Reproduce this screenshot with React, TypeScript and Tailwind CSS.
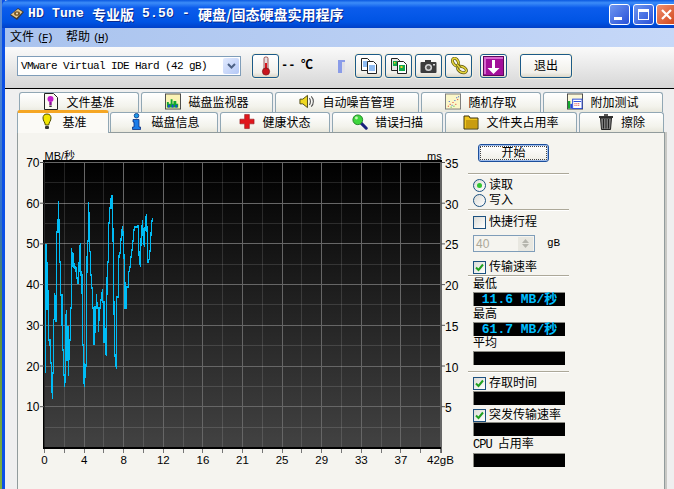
import type { ReactNode } from "react";

const MONO = "font-['Liberation_Mono','Noto_Sans_CJK_SC',monospace]";

const trace = [
  [45.5, 373], [45.5, 245], [46.5, 245], [47, 310], [47.3, 262], [48, 294], [48.5, 340], [50, 340], [50.5, 363], [51.5, 363], [51.7, 387], [52.5, 399], [52.7, 373], [53.5, 373], [53.7, 320], [54.5, 318], [54.6, 293], [55.5, 300], [56, 322], [56.7, 292], [56.8, 232], [58, 232], [58.3, 201], [59, 222], [59.4, 262], [60.5, 262], [60.6, 295], [62, 295], [62.1, 325], [62.7, 325], [62.9, 350], [63.3, 350], [63.4, 375], [64.6, 375], [64.8, 387], [65.3, 367], [65.4, 330], [66.3, 310], [66.4, 360], [67, 360], [67.1, 327], [68.3, 327], [68.4, 376], [69, 358], [69.1, 340], [70.3, 340], [70.4, 308], [71.7, 308], [71.8, 248], [72.4, 267], [73, 253], [73.2, 268], [74.7, 263], [75, 268], [76, 268], [76.3, 278], [77.3, 278], [77.5, 283], [78.7, 283], [79.3, 253], [80.3, 243], [81, 275], [82, 275], [82.2, 310], [82.7, 345], [83.3, 345], [83.4, 372], [84.3, 387], [84.5, 363], [85, 378], [86.3, 362], [86.4, 317], [87.3, 241], [88.3, 241], [88.4, 202], [89.3, 219], [89.4, 250], [90.3, 252], [90.4, 275], [91.7, 275], [91.8, 288], [92.7, 288], [92.8, 308], [94, 308], [94.1, 345], [95, 332], [95.1, 307], [96.7, 307], [96.8, 294], [97, 308], [98.3, 308], [98.4, 332], [99.3, 313], [100.7, 303], [101.7, 294], [102.7, 289], [102.8, 302], [104, 302], [104.1, 343], [105.3, 328], [105.4, 352], [106.3, 356], [106.5, 330], [107.3, 262], [108.3, 262], [108.4, 223], [109.7, 223], [109.8, 208], [111, 208], [111.1, 198], [112.3, 195], [113, 233], [114, 308], [114.7, 352], [115.7, 363], [116.3, 369], [116.7, 345], [116.8, 297], [118.3, 297], [118.4, 265], [119.3, 253], [120.7, 253], [120.8, 242], [121.7, 231], [122.7, 226], [123.3, 240], [124.3, 263], [125, 285], [125.1, 308], [126.3, 308], [126.4, 287], [128.3, 287], [128.4, 275], [130, 267], [131, 257], [132.3, 248], [133.3, 238], [134.3, 227], [137.3, 227], [138.3, 225], [139, 255], [140.3, 267], [141.3, 232], [142.7, 220], [143.3, 243], [144.3, 245], [145.3, 223], [146.3, 214], [147, 228], [148, 263], [149, 260], [150.3, 248], [151.3, 228], [152.3, 218],
];

function Chart() {
  const hLines = Array.from({ length: 14 }, (_, i) => Math.round(162 + 20.35 * i) + 0.5);
  const vLines = Array.from({ length: 21 }, (_, i) => Math.round(45 + 19.8 * i) - 0.5);
  const left = ["70", "60", "50", "40", "30", "20", "10"];
  const right = ["35", "30", "25", "20", "15", "10", "5"];
  const bottom = ["0", "4", "8", "12", "16", "21", "25", "29", "33", "37", "42gB"];
  return (
    <svg width="450" height="356" viewBox="18 133 450 356" className="shrink-0 block">
      <defs>
        <linearGradient id="plot" x1="0" y1="0" x2="0" y2="1">
          <stop offset="0" stopColor="#000000" />
          <stop offset="1" stopColor="#424242" />
        </linearGradient>
      </defs>
      <rect x="44" y="162" width="397" height="285" fill="url(#plot)" />
      {hLines.map((y, i) => (
        <line key={y} x1="44" x2="441" y1={y} y2={y} stroke={i % 2 === 0 ? "#666666" : "#ffffff"} strokeOpacity={i % 2 === 0 ? 1 : 0.13} />
      ))}
      {vLines.map((x, i) => (
        <line key={x} x1={x} x2={x} y1="162" y2="448" stroke={i % 2 === 0 ? "#666666" : "#ffffff"} strokeOpacity={i % 2 === 0 ? 1 : 0.13} />
      ))}
      <rect x="43" y="160" width="399" height="2" fill="#000" />
      <rect x="43" y="160" width="1.6" height="289" fill="#000" />
      <rect x="43" y="447" width="399" height="2" fill="#000" />
      <line x1="441.5" x2="441.5" y1="162" y2="453" stroke="#666666" />
      <polyline points={trace.map((p) => p.join(",")).join(" ")} fill="none" stroke="#00bcf5" strokeWidth="1.2" shapeRendering="crispEdges" />
      {left.map((t, i) => (
        <g key={t}>
          <text x="39.5" y={167 + 40.7 * i} textAnchor="end" fontSize="12" fill="#000">{t}</text>
          <line x1="40" x2="44" y1={162.5 + 40.7 * i} y2={162.5 + 40.7 * i} stroke="#555" />
        </g>
      ))}
      {right.map((t, i) => (
        <g key={t}>
          <text x="445" y={168 + 40.7 * i} fontSize="12" fill="#000">{t}</text>
          <line x1="441" x2="445" y1={162.5 + 40.7 * i} y2={162.5 + 40.7 * i} stroke="#555" />
        </g>
      ))}
      {vLines.map((x) => (
        <line key={x} x1={x} x2={x} y1="449" y2="453" stroke="#777" />
      ))}
      {bottom.map((t, i) => (
        <text key={t} x={44.5 + 39.6 * i} y="463.5" textAnchor="middle" fontSize="11.5" fill="#000">{t}</text>
      ))}
      <text x="44.5" y="160" fontSize="11" fill="#000">MB/秒</text>
      <text x="427" y="159.5" fontSize="11" fill="#000">ms</text>
    </svg>
  );
}

function HddIcon() {
  return (
    <svg width="16" height="16" viewBox="0 0 16 16">
      <path d="M1 9 9 2l6 4-7 8z" fill="#3a3a3a" />
      <path d="M2 8.5 9 3l4.5 3L7.5 12z" fill="#e9c98a" />
      <ellipse cx="8" cy="7.5" rx="3" ry="2.3" fill="#7a5a2a" />
      <circle cx="8" cy="7.5" r="1" fill="#f6e9c8" />
    </svg>
  );
}

function Thermometer() {
  return (
    <svg width="10" height="20" viewBox="0 0 10 20">
      <rect x="3" y="1" width="4" height="13" rx="1.5" fill="#e8e0e0" stroke="#8a3030" strokeWidth="0.8" />
      <rect x="4" y="7" width="2" height="8" fill="#d8141c" />
      <circle cx="5" cy="15.5" r="3.6" fill="#c8141c" stroke="#7a1014" strokeWidth="0.7" />
    </svg>
  );
}

function DocsIcon({ variant }: { variant: "lines" | "image" }) {
  const back = variant === "lines" ? "#ffffff" : "#e8e8e8";
  return (
    <svg width="18" height="18" viewBox="0 0 18 18">
      <path d="M1.5 1.5h6l2 2v10h-8z" fill={back} stroke="#222" />
      <path d="M7.5 4.5h6l3 3v9h-9z" fill="#fff" stroke="#222" />
      {variant === "lines" ? (
        <>
          <path d="M3 5h4M3 7h4M3 9h4" stroke="#1e78e6" />
          <path d="M9 9h6M9 11h6M9 13h6" stroke="#1e78e6" />
        </>
      ) : (
        <>
          <rect x="3" y="4" width="4" height="5" fill="#11a84a" />
          <rect x="9" y="8" width="6" height="6" fill="#11a84a" />
          <rect x="10.5" y="9" width="2" height="2" fill="#f5d020" />
          <rect x="4" y="5" width="1.5" height="1.5" fill="#f5d020" />
        </>
      )}
    </svg>
  );
}

function CameraIcon() {
  return (
    <svg width="17" height="15" viewBox="0 0 17 15">
      <path d="M5 3V1h6v2h4.5a1 1 0 0 1 1 1v9a1 1 0 0 1-1 1h-14a1 1 0 0 1-1-1V4a1 1 0 0 1 1-1z" fill="#3c3c3c" />
      <circle cx="8.5" cy="8.5" r="3.6" fill="#d4d4d4" />
      <circle cx="8.5" cy="8.5" r="2" fill="#555" />
      <rect x="13" y="5" width="2" height="1.5" fill="#ddd" />
    </svg>
  );
}

function ChainIcon() {
  const rings = [
    { cx: 5.5, cy: 5, rx: 4, ry: 2.6, r: 60 },
    { cx: 12, cy: 12.5, rx: 4.6, ry: 2.8, r: 25 },
  ];
  return (
    <svg width="18" height="18" viewBox="0 0 18 18">
      <g fill="none">
        {rings.map((o) => (
          <ellipse key={o.cx} cx={o.cx} cy={o.cy} rx={o.rx} ry={o.ry} transform={`rotate(${o.r} ${o.cx} ${o.cy})`} stroke="#5c5410" strokeWidth="3" />
        ))}
        {rings.map((o) => (
          <ellipse key={o.cx} cx={o.cx} cy={o.cy} rx={o.rx} ry={o.ry} transform={`rotate(${o.r} ${o.cx} ${o.cy})`} stroke="#e6d63c" strokeWidth="1.600" />
        ))}
        <path d="M7 7.500l3 3.500" stroke="#5c5410" strokeWidth="3" />
        <path d="M7 7.500l3 3.500" stroke="#e6d63c" strokeWidth="1.600" />
      </g>
    </svg>
  );
}

function SaveArrow() {
  return (
    <svg width="21" height="20" viewBox="0 0 21 20">
      <rect x="0.5" y="0.5" width="20" height="19" fill="#a3109a" stroke="#5c0a5a" />
      <path d="M1 1h19v2H3v15H1z" fill="#d868cf" />
      <path d="M9 4h3v8h4.5l-6 6-6-6H9z" fill="#ffffff" />
    </svg>
  );
}

function BulbIcon() {
  return (
    <svg width="16" height="17" viewBox="0 0 16 17">
      <path d="M8 1c3 0 4 2 4 4 0 3-2 4-2.300 7H6.300C6 9 4 8 4 5c0-2 1-4 4-4z" fill="#f2e600" stroke="#4e4a00" />
      <rect x="6" y="13" width="4" height="3" rx="1" fill="#333" />
    </svg>
  );
}

function InfoIcon() {
  return (
    <svg width="16" height="17" viewBox="0 0 16 17">
      <circle cx="8.500" cy="2.700" r="2.300" fill="#1c9ae8" stroke="#0b2f80" strokeWidth="0.8" />
      <path d="M5 6.500h6V14h1.500v2.500h-8V14H6V9H5z" fill="#1c7ce8" stroke="#0b2f80" strokeWidth="0.8" />
    </svg>
  );
}

function CrossIcon() {
  return (
    <svg width="17" height="17" viewBox="0 0 17 17">
      <path d="M6 1h5v5h5v5h-5v5H6v-5H1V6h5z" fill="#e0161c" stroke="#8c1014" strokeWidth="0.6" />
    </svg>
  );
}

function SearchIcon() {
  return (
    <svg width="18" height="18" viewBox="0 0 18 18">
      <path d="M10 10l6 6" stroke="#16207c" strokeWidth="3.400" strokeLinecap="round" />
      <circle cx="6.500" cy="6.500" r="5.500" fill="#3ed63c" stroke="#1c7c24" />
      <circle cx="5" cy="4.500" r="1.600" fill="#c5f5b5" />
    </svg>
  );
}

function FolderIcon() {
  return (
    <svg width="16" height="16" viewBox="0 0 16 16">
      <path d="M1 4V2h5l1 2h8v11H1z" fill="#f0c61c" stroke="#3c3210" />
      <path d="M3 6h11v8H3z" fill="#c89c10" />
    </svg>
  );
}

function TrashIcon() {
  return (
    <svg width="16" height="17" viewBox="0 0 16 17">
      <path d="M1 3h14v2H1z" fill="#333" />
      <path d="M6 1h4v2H6z" fill="#555" />
      <path d="M2.500 5h11l-1 11.500h-9z" fill="#7c7c7c" stroke="#222" />
      <path d="M5.500 6v9.500M8 6v9.500M10.500 6v9.500" stroke="#222" />
    </svg>
  );
}

function FileBulbIcon() {
  return (
    <svg width="16" height="17" viewBox="0 0 16 17">
      <path d="M1.500 0.500h9l4 4v12h-13z" fill="#fbfaf0" stroke="#222" />
      <circle cx="7.500" cy="6" r="3" fill="#c21ccc" />
      <rect x="6.300" y="9" width="2.400" height="3" fill="#8a1090" />
      <rect x="6.300" y="12.500" width="2.400" height="1.500" fill="#333" />
    </svg>
  );
}

function BarsIcon() {
  return (
    <svg width="17" height="17" viewBox="0 0 17 17">
      <rect x="0.500" y="0.500" width="16" height="16" fill="#fbf3b4" stroke="#444" />
      <path d="M2 15V9h2v2h2V6h2v5h1V8h3v3h2v4z" fill="#12a82c" />
      <path d="M3 15v-3h2v3zM7 15v-3h2v3zM11 15v-3h2v3z" fill="#1848d8" />
    </svg>
  );
}

function SpeakerIcon() {
  return (
    <svg width="17" height="17" viewBox="0 0 17 17">
      <path d="M1 6h3l5-4v13l-5-4H1z" fill="#f0d820" stroke="#4a4410" />
      <path d="M11 5c1.500 1.500 1.500 5.500 0 7M13 3c3 3 3 8 0 11" fill="none" stroke="#4a4a4a" strokeWidth="1.100" />
    </svg>
  );
}

function ScatterIcon() {
  const dots = [[3, 13, "#d81c1c"], [5, 11, "#d81c1c"], [4, 8, "#1c48d8"], [7, 12, "#1c48d8"], [8, 9, "#d81c1c"], [10, 7, "#1c48d8"], [11, 11, "#d81c1c"], [12, 4, "#1c48d8"], [13, 6, "#d81c1c"], [6, 14, "#12a82c"], [9, 13, "#12a82c"], [14, 3, "#1c48d8"]] as const;
  return (
    <svg width="17" height="17" viewBox="0 0 17 17">
      <rect x="0.500" y="0.500" width="16" height="16" fill="#fbf7c8" stroke="#777" />
      {dots.map(([x, y, c]) => (
        <rect key={`${x}-${y}`} x={x} y={y} width="1" height="1" fill={c} />
      ))}
    </svg>
  );
}

function ExtraIcon() {
  return (
    <svg width="17" height="17" viewBox="0 0 17 17">
      <rect x="0.500" y="0.500" width="16" height="16" fill="#fbf7d8" stroke="#444" />
      <rect x="1" y="8" width="2.500" height="8" fill="#12a82c" />
      <rect x="3.500" y="11" width="2" height="5" fill="#2848d8" />
      <rect x="6" y="6" width="10" height="10" fill="#fff" stroke="#2848d8" />
      <path d="M7 8h8v1H7z" fill="#2848d8" />
      <path d="M8 10h1v1H8zM10 10h1v1h-1zM12 10h1v1h-1zM8 12h1v1H8zM10 12h1v1h-1zM12 12h1v1h-1z" fill="#d81c1c" />
    </svg>
  );
}

function ToolButton({ children, className = "w-[27px]" }: { children: ReactNode; className?: string }) {
  return (
    <div className={`h-[24px] ${className} flex items-center justify-center rounded-[3px] border border-[#1c5a87] bg-[linear-gradient(180deg,#ffffff,#f1f0ea_80%,#dcd8c8)] shadow-[0_0_0_1px_#f3efdc] text-[12px] text-black`}>
      {children}
    </div>
  );
}

function Tab({ width, icon, label }: { width: string; icon: ReactNode; label: string }) {
  return (
    <div className={`${width} h-[20px] shrink-0 flex items-center justify-center gap-[7px] rounded-t-[3px] border border-b-0 border-[#91a7b4] bg-[linear-gradient(180deg,#ffffff,#f3f3ec_70%,#e8e7dc)] text-[12px] text-black`}>
      <span className="w-[16px] flex justify-center -mt-[2px]">{icon}</span>
      <span className="whitespace-nowrap">{label}</span>
    </div>
  );
}

function Separator({ className }: { className: string }) {
  return <div className={`${className} h-[2px] border-t border-[#aca899] border-b-white border-b`} />;
}

function CheckBox({ label, checked = false, className = "" }: { label: string; checked?: boolean; className?: string }) {
  return (
    <div className={`${className} ml-[5px] h-[14px] flex items-center gap-[3px] whitespace-nowrap text-[12px] leading-[14px]`}>
      <span className="w-[13px] h-[13px] shrink-0 border border-[#1c5180] bg-[linear-gradient(135deg,#dcdcd7,#ffffff)] flex items-center justify-center">
        {checked && (
          <svg width="9" height="9" viewBox="0 0 9 9">
            <path d="M1 4.500 3.500 7 8 1.500" fill="none" stroke="#21a121" strokeWidth="2" />
          </svg>
        )}
      </span>
      {label}
    </div>
  );
}

function RadioRow({ label, checked = false }: { label: string; checked?: boolean }) {
  return (
    <div className="ml-[5px] h-[15px] flex items-center gap-[3px] text-[12px] leading-[15px]">
      <span className="w-[13px] h-[13px] shrink-0 rounded-full border border-[#1c5180] bg-[linear-gradient(135deg,#dcdcd7,#ffffff)] flex items-center justify-center">
        {checked && <span className="w-[5px] h-[5px] rounded-full bg-[#31c531]" />}
      </span>
      {label}
    </div>
  );
}

function Readout({ value, className = "mt-[1px]" }: { value?: string; className?: string }) {
  return (
    <div className={`${className} ml-[5px] w-[92px] h-[14px] bg-black border-t border-l border-[#8c8c84] flex items-center justify-center text-[13px] leading-none font-bold text-[#00bfff] whitespace-pre ${MONO}`}>
      {value}
    </div>
  );
}

function Label({ children }: { children: ReactNode }) {
  return <div className="ml-[5px] h-[14px] text-[12px] leading-[14px] whitespace-nowrap">{children}</div>;
}

function SidePanel() {
  return (
    <div className="w-[101px] shrink-0 flex flex-col text-black">
      <div className="mt-[11px] ml-[10px] w-[71px] h-[18px] rounded-[3px] border border-[#1c4f9c] shadow-[inset_0_0_0_1px_#9ebcec] bg-[linear-gradient(180deg,#ffffff,#efeee6)] flex items-center justify-center text-[12px]">
        <span className="outline-1 outline-dotted outline-[#444] w-[65px] h-[12px] leading-[12px] text-center whitespace-nowrap">开始</span>
      </div>
      <Separator className="mt-[11px]" />
      <div className="mt-[3px]">
        <RadioRow label="读取" checked />
        <RadioRow label="写入" />
      </div>
      <Separator className="mt-[1px]" />
      <CheckBox label="快捷行程" className="mt-[4px]" />
      <div className="mt-[6px] ml-[5px] h-[17px] flex items-center">
        <div className="w-[62px] h-[17px] border border-[#7f9db9] bg-[#f5f4ef] flex items-center justify-between pl-[2px] pr-[1px] text-[12px] text-[#aca899]">
          40
          <span className="w-[15px] h-[14px] bg-[#e8e7e0] flex flex-col items-center justify-center gap-[1px]">
            <svg width="7" height="4" viewBox="0 0 7 4"><path d="M0 4 3.500 0 7 4z" fill="#b5b5ad" /></svg>
            <svg width="7" height="4" viewBox="0 0 7 4"><path d="M0 0h7L3.500 4z" fill="#b5b5ad" /></svg>
          </span>
        </div>
        <span className={`ml-[12px] text-[11px] ${MONO}`}>gB</span>
      </div>
      <CheckBox label="传输速率" checked className="mt-[8px]" />
      <Separator className="mt-[1px]" />
      <Label>最低</Label>
      <Readout value="11.6 MB/秒" />
      <div className="mt-[1px]"><Label>最高</Label></div>
      <Readout value="61.7 MB/秒" />
      <Label>平均</Label>
      <Readout />
      <Separator className="mt-[6px]" />
      <CheckBox label="存取时间" checked className="mt-[3px]" />
      <Readout />
      <CheckBox label="突发传输速率" checked className="mt-[3px]" />
      <Readout className="mt-0" />
      <div className="mt-[1px]"><Label><span className={`text-[12px] tracking-[-1px] ${MONO}`}>CPU </span>占用率</Label></div>
      <Readout className="mt-[2px]" />
    </div>
  );
}

export default function App() {
  return (
    <div className="w-[674px] h-[489px] overflow-hidden flex bg-[#efefef] font-['Liberation_Sans','Noto_Sans_CJK_SC',sans-serif] text-black">
      <div className="w-[2px] shrink-0 bg-[linear-gradient(180deg,#5f8fd8_0%,#2f6fc8_45%,#5c8e3c_62%,#7fb040_100%)]" />
      <div className="flex-1 min-w-0 flex flex-col border-l-[3px] border-[#0b50e6]">
        <div className="h-[28px] -ml-[3px] shrink-0 flex items-center pl-[7px] bg-[linear-gradient(180deg,#0a58e0_0%,#3c8cf8_10%,#0b5cec_28%,#0054e4_78%,#0040c8_100%)] rounded-tl-[6px]">
          <HddIcon />
          <div className={`ml-[3px] flex items-center whitespace-pre text-white font-bold text-[13px] tracking-[0.2px] [text-shadow:1px_1px_0_#0a2a90] ${MONO}`}>
            HD Tune <span className="text-[14px] tracking-normal font-['Noto_Sans_CJK_SC']">专业版</span> 5.50 - <span className="text-[14px] tracking-normal font-['Noto_Sans_CJK_SC']">硬盘/固态硬盘实用程序</span>
          </div>
          <div className="ml-auto -mr-[3px] flex gap-[2.500px]">
            <div className="w-[21px] h-[21px] rounded-[3px] border border-white bg-[linear-gradient(135deg,#6f97f0,#2850d8)] flex items-end pl-[4px] pb-[4px]">
              <span className="w-[8px] h-[3px] bg-white" />
            </div>
            <div className="w-[21px] h-[21px] rounded-[3px] border border-white bg-[linear-gradient(135deg,#6f97f0,#2850d8)] flex items-center justify-center">
              <span className="w-[11px] h-[11px] border border-white border-t-[3px]" />
            </div>
            <div className="w-[21px] h-[21px] rounded-[3px] border border-white bg-[linear-gradient(135deg,#f09070,#d04418)] flex items-center justify-center">
              <svg width="11" height="11" viewBox="0 0 11 11"><path d="M1 1l9 9M10 1l-9 9" stroke="#fff" strokeWidth="2.200" /></svg>
            </div>
          </div>
        </div>
        <div className="h-[19px] shrink-0 flex items-center pl-[5px] gap-[14px] text-[12px] bg-[linear-gradient(90deg,#a9c3ee,#c6d8f8)]">
          <span className="whitespace-pre">文件<span className={`ml-[3px] text-[11px] tracking-[-1.6px] ${MONO}`}>(<span className="underline">F</span>)</span></span>
          <span className="whitespace-pre">帮助<span className={`ml-[3px] text-[11px] tracking-[-1.6px] ${MONO}`}>(<span className="underline">H</span>)</span></span>
        </div>
        <div className="h-[42px] shrink-0 flex items-center pb-[3px] border-b border-black bg-[linear-gradient(180deg,#fafafa,#d6d6d6)]">
          <div className="ml-[12px] w-[224px] h-[20px] border border-[#7f9db9] bg-white flex items-center justify-between pl-[3px] pr-[1px]">
            <span className={`text-[11px] tracking-[-0.6px] whitespace-pre ${MONO}`}>VMware Virtual IDE Hard (42 gB)</span>
            <span className="w-[16px] h-[16px] rounded-[2px] bg-[linear-gradient(135deg,#e2eafe,#b4c8f6)] flex items-center justify-center">
              <svg width="9" height="6" viewBox="0 0 9 6"><path d="M1 1l3.500 3.500L8 1" fill="none" stroke="#4d6185" strokeWidth="2" /></svg>
            </span>
          </div>
          <ToolButton className="ml-[11px] w-[27px]"><Thermometer /></ToolButton>
          <span className={`ml-[2px] w-[16px] text-[12px] font-bold ${MONO}`}>--</span>
          <span className={`ml-[4px] text-[12px] font-bold ${MONO}`}>℃</span>
          <svg width="7" height="13" viewBox="0 0 7 13" className="ml-[25px]">
            <path d="M0 0h7v2H4v11H0z" fill="#8a9ce8" />
            <path d="M4 2h3v11H4z" fill="#e0e0e6" />
          </svg>
          <ToolButton className="ml-[10px] w-[27px]"><DocsIcon variant="lines" /></ToolButton>
          <ToolButton className="ml-[3px] w-[27px]"><DocsIcon variant="image" /></ToolButton>
          <ToolButton className="ml-[3px] w-[27px]"><CameraIcon /></ToolButton>
          <ToolButton className="ml-[3px] w-[27px]"><ChainIcon /></ToolButton>
          <ToolButton className="ml-[8px] w-[27px]"><SaveArrow /></ToolButton>
          <ToolButton className="ml-[13px] w-[52px]">退出</ToolButton>
        </div>
        <div className="flex-1 min-h-0 flex flex-col">
          <div className="mt-[3px] ml-[14px] flex gap-[2px] shrink-0">
            <Tab width="w-[120px]" icon={<FileBulbIcon />} label="文件基准" />
            <Tab width="w-[132px]" icon={<BarsIcon />} label="磁盘监视器" />
            <Tab width="w-[144px]" icon={<SpeakerIcon />} label="自动噪音管理" />
            <Tab width="w-[120px]" icon={<ScatterIcon />} label="随机存取" />
            <Tab width="w-[120px]" icon={<ExtraIcon />} label="附加测试" />
          </div>
          <div className="ml-[12px] flex items-end shrink-0 h-[20px] relative z-10">
            <div className="w-[92px] h-[23px] -mb-[1px] shrink-0 flex items-center justify-center gap-[7px] border-t-[3px] border-[#f5a623] rounded-t-[3px] bg-[#fbfaf6] text-[12px] border-x border-x-[#91a7b4]">
              <span className="w-[16px] flex justify-center -mt-[3px]"><BulbIcon /></span>
              基准
            </div>
            <div className="flex gap-[2px] ml-[1px]">
              <Tab width="w-[108px]" icon={<InfoIcon />} label="磁盘信息" />
              <Tab width="w-[110px]" icon={<CrossIcon />} label="健康状态" />
              <Tab width="w-[111px]" icon={<SearchIcon />} label="错误扫描" />
              <Tab width="w-[132px]" icon={<FolderIcon />} label="文件夹占用率" />
              <Tab width="w-[85px]" icon={<TrashIcon />} label="擦除" />
            </div>
          </div>
          <div className="ml-[12px] w-[648px] flex-1 min-h-0 flex border border-[#919b9c] border-b-0 bg-[#f5f4ef] shadow-[2px_0_0_#c8c8c4]">
            <Chart />
            <SidePanel />
          </div>
        </div>
      </div>
    </div>
  );
}
